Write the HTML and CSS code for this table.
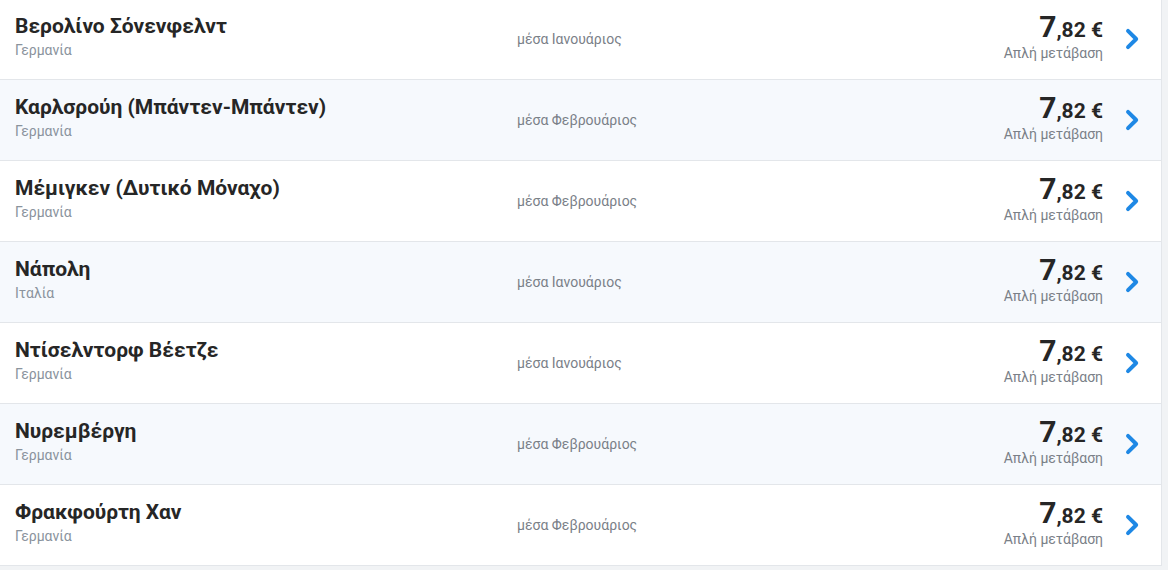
FILE: index.html
```html
<!DOCTYPE html>
<html lang="el">
<head>
<meta charset="utf-8">
<title>Προορισμοί</title>
<link rel="stylesheet" href="styles.css">
</head>
<body>
<ul class="list">
  <li class="row">
    <div class="dest"><div class="name">Βερολίνο Σόνενφελντ</div><div class="country">Γερμανία</div></div>
    <div class="when">μέσα Ιανουάριος</div>
    <div class="price"><div class="amount"><span class="int">7</span>,82 €</div><div class="trip">Απλή μετάβαση</div></div>
    <svg class="chev" viewBox="0 0 14 22" width="14" height="22"><path d="M3 2.8 L11.2 11 L3 19.2" fill="none" stroke="currentColor" stroke-width="3.9" stroke-linecap="round" stroke-linejoin="round"/></svg>
  </li>
  <li class="row alt">
    <div class="dest"><div class="name">Καρλσρούη (Μπάντεν-Μπάντεν)</div><div class="country">Γερμανία</div></div>
    <div class="when">μέσα Φεβρουάριος</div>
    <div class="price"><div class="amount"><span class="int">7</span>,82 €</div><div class="trip">Απλή μετάβαση</div></div>
    <svg class="chev" viewBox="0 0 14 22" width="14" height="22"><path d="M3 2.8 L11.2 11 L3 19.2" fill="none" stroke="currentColor" stroke-width="3.9" stroke-linecap="round" stroke-linejoin="round"/></svg>
  </li>
  <li class="row">
    <div class="dest"><div class="name">Μέμιγκεν (Δυτικό Μόναχο)</div><div class="country">Γερμανία</div></div>
    <div class="when">μέσα Φεβρουάριος</div>
    <div class="price"><div class="amount"><span class="int">7</span>,82 €</div><div class="trip">Απλή μετάβαση</div></div>
    <svg class="chev" viewBox="0 0 14 22" width="14" height="22"><path d="M3 2.8 L11.2 11 L3 19.2" fill="none" stroke="currentColor" stroke-width="3.9" stroke-linecap="round" stroke-linejoin="round"/></svg>
  </li>
  <li class="row alt">
    <div class="dest"><div class="name">Νάπολη</div><div class="country">Ιταλία</div></div>
    <div class="when">μέσα Ιανουάριος</div>
    <div class="price"><div class="amount"><span class="int">7</span>,82 €</div><div class="trip">Απλή μετάβαση</div></div>
    <svg class="chev" viewBox="0 0 14 22" width="14" height="22"><path d="M3 2.8 L11.2 11 L3 19.2" fill="none" stroke="currentColor" stroke-width="3.9" stroke-linecap="round" stroke-linejoin="round"/></svg>
  </li>
  <li class="row">
    <div class="dest"><div class="name">Ντίσελντορφ Βέετζε</div><div class="country">Γερμανία</div></div>
    <div class="when">μέσα Ιανουάριος</div>
    <div class="price"><div class="amount"><span class="int">7</span>,82 €</div><div class="trip">Απλή μετάβαση</div></div>
    <svg class="chev" viewBox="0 0 14 22" width="14" height="22"><path d="M3 2.8 L11.2 11 L3 19.2" fill="none" stroke="currentColor" stroke-width="3.9" stroke-linecap="round" stroke-linejoin="round"/></svg>
  </li>
  <li class="row alt">
    <div class="dest"><div class="name">Νυρεμβέργη</div><div class="country">Γερμανία</div></div>
    <div class="when">μέσα Φεβρουάριος</div>
    <div class="price"><div class="amount"><span class="int">7</span>,82 €</div><div class="trip">Απλή μετάβαση</div></div>
    <svg class="chev" viewBox="0 0 14 22" width="14" height="22"><path d="M3 2.8 L11.2 11 L3 19.2" fill="none" stroke="currentColor" stroke-width="3.9" stroke-linecap="round" stroke-linejoin="round"/></svg>
  </li>
  <li class="row">
    <div class="dest"><div class="name">Φρακφούρτη Χαν</div><div class="country">Γερμανία</div></div>
    <div class="when">μέσα Φεβρουάριος</div>
    <div class="price"><div class="amount"><span class="int">7</span>,82 €</div><div class="trip">Απλή μετάβαση</div></div>
    <svg class="chev" viewBox="0 0 14 22" width="14" height="22"><path d="M3 2.8 L11.2 11 L3 19.2" fill="none" stroke="currentColor" stroke-width="3.9" stroke-linecap="round" stroke-linejoin="round"/></svg>
  </li>
</ul>
</body>
</html>
```

FILE: styles.css
```css
html, body {
  margin: 0;
  padding: 0;
  background: #f1f3f5;
  font-family: Roboto, "Noto Sans", Arial, sans-serif;
}
.list {
  list-style: none;
  margin: -1px 0 0 0;
  padding: 0;
  width: 1161px;
  background: #fff;
  border-right: 1px solid #e3e6ea;
}
.row {
  display: grid;
  grid-template-columns: 502px 1fr auto 14px;
  align-items: center;
  height: 80px;
  padding: 0 22px 0 15px;
  border-bottom: 1px solid #e3e6ea;
  background: #fff;
}
.row.alt {
  background: #f6f9fd;
}
.dest {
  align-self: start;
  padding-top: 14px;
}
.name {
  font-size: 21px;
  line-height: 26px;
  font-weight: 700;
  color: #262626;
}
.country {
  font-size: 14px;
  line-height: 22px;
  color: #8a939d;
}
.when {
  font-size: 14px;
  color: #7a8088;
  padding-bottom: 1px;
}
.price {
  text-align: right;
  margin-right: 22px;
  padding-bottom: 3px;
}
.amount {
  font-size: 21px;
  font-weight: 700;
  color: #262626;
  line-height: 28px;
}
.amount .int {
  font-size: 30px;
}
.trip {
  font-size: 14px;
  line-height: 18px;
  color: #7a8088;
}
.chev {
  display: block;
  color: #1e88e5;
}
```
